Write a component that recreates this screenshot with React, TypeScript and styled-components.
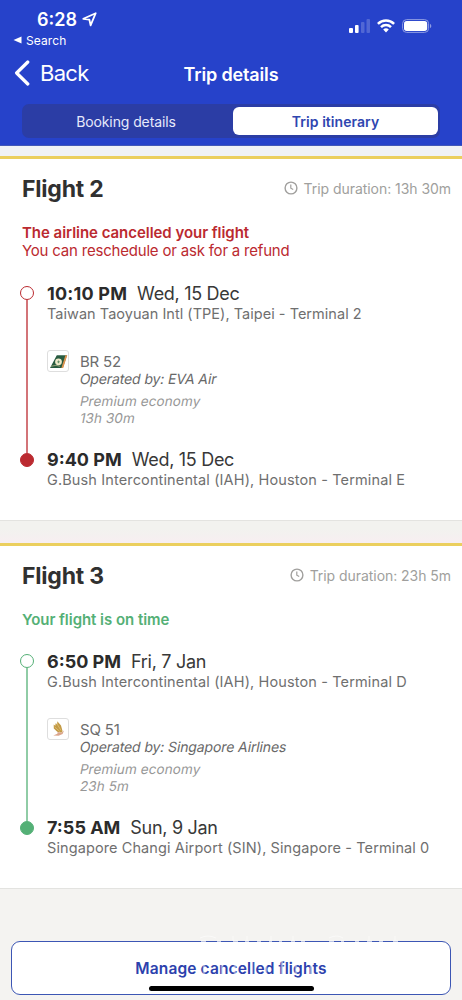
import React from "react";
import styled, { createGlobalStyle } from "styled-components";

const Global = createGlobalStyle`
  * { box-sizing: border-box; }
  body { margin: 0; background: #f4f3f1; font-family: Inter, "Liberation Sans", sans-serif; }
`;

const Screen = styled.div`
  width: 462px;
  height: 1000px;
  overflow: hidden;
  display: flex;
  flex-direction: column;
  background: #f4f3f1;
`;

const Header = styled.header`
  height: 146px;
  flex: none;
  background: #2642ca;
  color: #fff;
  border-bottom: 1px solid #4258b8;
`;

const StatusBar = styled.div`
  height: 31px;
  padding: 8px 30px 0 37px;
  display: flex;
  justify-content: space-between;
`;

const Clock = styled.div`
  display: flex;
  align-items: center;
  gap: 5px;
  height: 22px;
  font-size: 18px;
  font-weight: 600;
`;

const Indicators = styled.div`
  display: flex;
  align-items: center;
  gap: 7px;
  height: 20px;
  margin-top: 8px;
`;

const BackToApp = styled.div`
  height: 18px;
  padding-left: 13px;
  display: flex;
  align-items: center;
  gap: 4px;
  font-size: 12px;
  letter-spacing: 0.1px;
`;

const NavBar = styled.div`
  height: 53px;
  padding: 0 14px 5px;
  display: grid;
  grid-template-columns: 1fr auto 1fr;
  align-items: center;
`;

const Back = styled.div`
  display: flex;
  align-items: center;
  gap: 10px;
  font-size: 22px;
  line-height: 28px;
  letter-spacing: -0.7px;
`;

const NavTitle = styled.h1`
  margin: 3px 0 0;
  font-size: 18px;
  line-height: 24px;
  font-weight: 600;
  letter-spacing: -0.15px;
`;

const Segments = styled.div`
  height: 34px;
  margin: 2px 22px 0;
  padding: 3px 2px;
  display: grid;
  grid-template-columns: 1fr 205px;
  border-radius: 7px;
  background: #2b3da5;
`;

const Segment = styled.div<{ $active?: boolean }>`
  display: flex;
  align-items: center;
  justify-content: center;
  padding-right: ${(p) => (p.$active ? 0 : 5)}px;
  border-radius: 6px;
  font-size: 14px;
  letter-spacing: ${(p) => (p.$active ? "0.05px" : "-0.1px")};
  font-weight: ${(p) => (p.$active ? 600 : 400)};
  color: ${(p) => (p.$active ? "#2f46b0" : "#e6e9fb")};
  background: ${(p) => (p.$active ? "#fff" : "transparent")};
`;

const Gap = styled.div<{ $height: number; $tint: string }>`
  flex: none;
  height: ${(p) => p.$height}px;
  background: ${(p) => p.$tint};
`;

const Card = styled.section<{ $height: number }>`
  flex: none;
  height: ${(p) => p.$height}px;
  padding: 15px 11px 0 22px;
  background: #fff;
  border-top: 3px solid #ebcf5e;
  border-bottom: 1px solid #e3e3e0;
`;

const CardHead = styled.div`
  height: 30px;
  display: flex;
  align-items: center;
  justify-content: space-between;
`;

const FlightTitle = styled.h2`
  margin: 0;
  font-size: 23px;
  line-height: 30px;
  font-weight: 700;
  letter-spacing: -0.2px;
  color: #303030;
`;

const Duration = styled.div`
  margin-bottom: 2px;
  display: flex;
  align-items: center;
  gap: 6px;
  font-size: 14px;
  letter-spacing: -0.05px;
  color: #a09f9d;
`;

const Status = styled.div<{ $color: string }>`
  margin-top: 20px;
  font-size: 15px;
  line-height: 18px;
  color: ${(p) => p.$color};
`;

const StatusTitle = styled.div`
  font-weight: 600;
  letter-spacing: -0.04px;
`;

const StatusNote = styled.div`
  letter-spacing: -0.2px;
`;

const Itinerary = styled.div<{ $top: number }>`
  margin-top: ${(p) => p.$top}px;
  display: grid;
  grid-template-columns: 10px 1fr;
  column-gap: 15px;
`;

const Rail = styled.div<{ $color: string }>`
  width: 14px;
  height: 181px;
  margin: 2px 0 0 -2px;
  display: flex;
  flex-direction: column;
  align-items: center;
  color: ${(p) => p.$color};
`;

const Dot = styled.div<{ $filled?: boolean }>`
  width: 14px;
  height: 14px;
  flex: none;
  border: 1px solid currentColor;
  border-radius: 50%;
  background: ${(p) => (p.$filled ? "currentColor" : "#fff")};
`;

const Track = styled.div`
  flex: 1;
  width: 2px;
  background: currentColor;
  opacity: 0.65;
`;

const Stop = styled.div`
  height: 42px;
`;

const When = styled.div`
  font-size: 18px;
  line-height: 20px;
  letter-spacing: -0.3px;
  color: #383838;
  white-space: pre;
`;

const Time = styled.b<{ $tracking: number }>`
  margin-right: 10px;
  font-weight: 700;
  letter-spacing: ${(p) => p.$tracking}px;
  color: #2b2b2b;
`;

const Place = styled.div<{ $tracking: number }>`
  font-size: 14.5px;
  line-height: 20px;
  letter-spacing: ${(p) => p.$tracking}px;
  color: #6f6f6f;
  white-space: nowrap;
`;

const Leg = styled.div`
  height: 124px;
  padding-top: 23px;
  display: flex;
  gap: 11px;
`;

const Airline = styled.div`
  width: 22px;
  height: 22px;
  margin-top: 1px;
  border: 1px solid #dedede;
  border-radius: 3px;
  background: #fff;
`;

const FlightNo = styled.div`
  margin-top: 4px;
  font-size: 15px;
  line-height: 17px;
  letter-spacing: -0.2px;
  color: #6d6d6d;
`;

const Operator = styled.div`
  font-size: 14px;
  line-height: 18px;
  letter-spacing: -0.12px;
  transform: skewX(-11deg);
  color: #686868;
`;

const Cabin = styled.div`
  margin-top: 5px;
  font-size: 13.5px;
  line-height: 17px;
  letter-spacing: 0.1px;
  color: #979797;
`;

const CabinLine = styled.div`
  transform: skewX(-11deg);
`;

const Footer = styled.div`
  flex: none;
  position: relative;
  margin: 52px 11px 0;
`;

const ManageButton = styled.button`
  display: block;
  width: 440px;
  height: 54px;
  padding: 1px 0 0;
  border: 1px solid #3c56b4;
  border-radius: 9px;
  background: #fff;
  color: #2c41ad;
  font: 600 15.5px/52px Inter, "Liberation Sans", sans-serif;
  letter-spacing: 0.13px;
`;

const HomeIndicator = styled.div`
  position: absolute;
  left: 138px;
  top: 45px;
  width: 165px;
  height: 5px;
  border-radius: 3px;
  background: #000;
`;

const Haze = styled.svg`
  position: absolute;
  left: 184px;
  top: -8px;
`;

const ClockIcon = () => (
  <svg width="14" height="14" viewBox="0 0 14 14" fill="none" stroke="#a09f9d" strokeWidth="1.4">
    <circle cx="7" cy="7" r="5.9" />
    <path d="M6.8 3.6V7.2L9.2 8.6" strokeWidth="1.2" />
  </svg>
);

const EvaLogo = () => (
  <svg width="20" height="20" viewBox="0 0 20 20" style={{ display: "block" }}>
    <path d="M2 17 8.8 4.3H19L14.8 17Z" fill="#285b40" />
    <path d="M17.4 4.3H19.3L15.2 17H13.4Z" fill="#df934f" />
    <circle cx="10.5" cy="10.8" r="3.4" fill="#eee9c9" />
    <path d="m10.3 9.2 1.6 1.6-1.6 1.6-1-1.6Z" fill="#65906b" />
    <path d="m3 15.3 5-1 4 1" stroke="#dccf9c" strokeWidth=".6" fill="none" />
  </svg>
);

const SingaporeLogo = () => (
  <svg width="20" height="20" viewBox="0 0 20 20" style={{ display: "block" }}>
    <path d="M9.3 2.2 13 6.5l1.6 5.7-1.2 1.6-4.2-1-3.4-3.3-.1-4 1.6 1.3.3-2.6 1.6 1.2Z" fill="#c39a45" />
    <path d="m8.8 4.5 4.2 7M6.8 8l5 4.5" stroke="#e3c77f" strokeWidth=".7" fill="none" />
    <path d="m16 11.6-2.6 2.2-3.8-.8-.2 1.8-4.2 1.6 5.4.3 4-1.6Z" fill="#dba68c" />
  </svg>
);

interface StopData {
  time: string;
  date: string;
  place: string;
  timeTracking?: number;
  placeTracking?: number;
}

interface Flight {
  title: string;
  duration: string;
  color: string;
  status: string;
  note?: string;
  height: number;
  from: StopData;
  to: StopData;
  number: string;
  operator: string;
  logo: React.ReactNode;
}

const flights: Flight[] = [
  {
    title: "Flight 2",
    duration: "13h 30m",
    color: "#bb2a30",
    status: "The airline cancelled your flight",
    note: "You can reschedule or ask for a refund",
    height: 365,
    from: {
      time: "10:10 PM",
      date: "Wed, 15 Dec",
      place: "Taiwan Taoyuan Intl (TPE), Taipei - Terminal 2",
      timeTracking: 0.2,
      placeTracking: 0.03,
    },
    to: { time: "9:40 PM", date: "Wed, 15 Dec", place: "G.Bush Intercontinental (IAH), Houston - Terminal E" },
    number: "BR 52",
    operator: "EVA Air",
    logo: <EvaLogo />,
  },
  {
    title: "Flight 3",
    duration: "23h 5m",
    color: "#54b076",
    status: "Your flight is on time",
    height: 346,
    from: { time: "6:50 PM", date: "Fri, 7 Jan", place: "G.Bush Intercontinental (IAH), Houston - Terminal D" },
    to: {
      time: "7:55 AM",
      date: "Sun, 9 Jan",
      place: "Singapore Changi Airport (SIN), Singapore - Terminal 0",
      placeTracking: 0.1,
    },
    number: "SQ 51",
    operator: "Singapore Airlines",
    logo: <SingaporeLogo />,
  },
];

const StopInfo = ({ stop }: { stop: StopData }) => (
  <Stop>
    <When>
      <Time $tracking={stop.timeTracking ?? 0}>{stop.time}</Time>
      {stop.date}
    </When>
    <Place $tracking={stop.placeTracking ?? 0.13}>{stop.place}</Place>
  </Stop>
);

const FlightCard = ({ f }: { f: Flight }) => (
  <Card $height={f.height}>
    <CardHead>
      <FlightTitle>{f.title}</FlightTitle>
      <Duration><ClockIcon />Trip duration: {f.duration}</Duration>
    </CardHead>
    <Status $color={f.color}>
      <StatusTitle>{f.status}</StatusTitle>
      {f.note && <StatusNote>{f.note}</StatusNote>}
    </Status>
    <Itinerary $top={f.note ? 24 : 23}>
      <Rail $color={f.color}><Dot /><Track /><Dot $filled /></Rail>
      <div>
        <StopInfo stop={f.from} />
        <Leg>
          <Airline>{f.logo}</Airline>
          <div>
            <FlightNo>{f.number}</FlightNo>
            <Operator>Operated by: {f.operator}</Operator>
            <Cabin>
              <CabinLine>Premium economy</CabinLine>
              <CabinLine>{f.duration}</CabinLine>
            </Cabin>
          </div>
        </Leg>
        <StopInfo stop={f.to} />
      </div>
    </Itinerary>
  </Card>
);

export default function App() {
  return (
    <Screen>
      <Global />
      <Header>
        <StatusBar>
          <Clock>
            6:28
            <svg width="15" height="15" viewBox="0 0 15 15" fill="none" stroke="#fff" strokeWidth="1.8" strokeLinejoin="round">
              <path d="M13.7 1.2 8.6 13.4 7.4 7.7 1.3 6.8Z" />
            </svg>
          </Clock>
          <Indicators>
            <svg width="21" height="14" viewBox="0 0 21 14" fill="#fff">
              <rect x="0" y="9" width="4" height="5" rx="1" />
              <rect x="6" y="6" width="3.6" height="8" rx="1" />
              <rect x="12" y="3" width="3.5" height="11" rx="1" opacity=".2" />
              <rect x="17.5" y="0" width="3.5" height="14" rx="1" opacity=".2" />
            </svg>
            <svg width="18" height="14" viewBox="0 0 18 14" fill="none" stroke="#fff" strokeWidth="2.5">
              <path d="M.9 4.8C5.5.3 12.5.3 17.1 4.8" />
              <path d="M4 8.1c2.8-2.7 7.2-2.7 10 0" />
              <path d="M6.2 10.5 9 13.5l2.8-3a4 4 0 0 0-5.6 0Z" fill="#fff" stroke="none" />
            </svg>
            <svg width="30" height="14" viewBox="0 0 30 14">
              <rect x=".6" y=".6" width="26" height="12.8" rx="4" fill="none" stroke="#8e9ce3" />
              <rect x="2" y="2" width="23.2" height="10" rx="2.7" fill="#fff" />
              <path d="M28 4.8c1.8.8 1.8 3.6 0 4.4Z" fill="#8e9ce3" />
            </svg>
          </Indicators>
        </StatusBar>
        <BackToApp>
          <svg width="9" height="8" viewBox="0 0 9 8"><path d="M.5 4 8.5 .4v7.2Z" fill="#fff" /></svg>
          Search
        </BackToApp>
        <NavBar>
          <Back>
            <svg width="16" height="26" viewBox="0 0 16 26" fill="none" stroke="#fff" strokeWidth="3.2" strokeLinecap="round" strokeLinejoin="round">
              <path d="M13.8 2 2.6 13 13.8 24" />
            </svg>
            Back
          </Back>
          <NavTitle>Trip details</NavTitle>
        </NavBar>
        <Segments>
          <Segment>Booking details</Segment>
          <Segment $active>Trip itinerary</Segment>
        </Segments>
      </Header>
      <Gap $height={10} $tint="#f0f2f5" />
      <FlightCard f={flights[0]} />
      <Gap $height={22} $tint="linear-gradient(#f2f2ef 40%, #f7eef1)" />
      <FlightCard f={flights[1]} />
      <Footer>
        <ManageButton>Manage cancelled flights</ManageButton>
        <Haze width="230" height="45" viewBox="0 0 230 45" fill="none" stroke="#fff">
          <path d="M6 8.5H11M22 8.5h4M38 8.5h5M50 8.5h4M62 8.5h4M74 8.5h3M84 8.5h3M96 8.5h4M106 8.5h4M134 8.5h5M146 8.5h3M160 8.5h4M172 8.5h5M184 8.5h4M198 8.5h5" strokeWidth="2" opacity=".65" />
          <path d="M5 5q8-4 16 0M38 3v5M52 3v5M76 3v5M98 3v5M134 5q8-4 14 0M174 3v5M200 3v5" opacity=".5" />
          <path d="M9 28v13M27 28v13M40 28v13M57 28v13M71 28v13M87 28v13M101 28v13M116 28v13" strokeWidth="2.5" opacity=".45" />
        </Haze>
        <HomeIndicator />
      </Footer>
    </Screen>
  );
}
